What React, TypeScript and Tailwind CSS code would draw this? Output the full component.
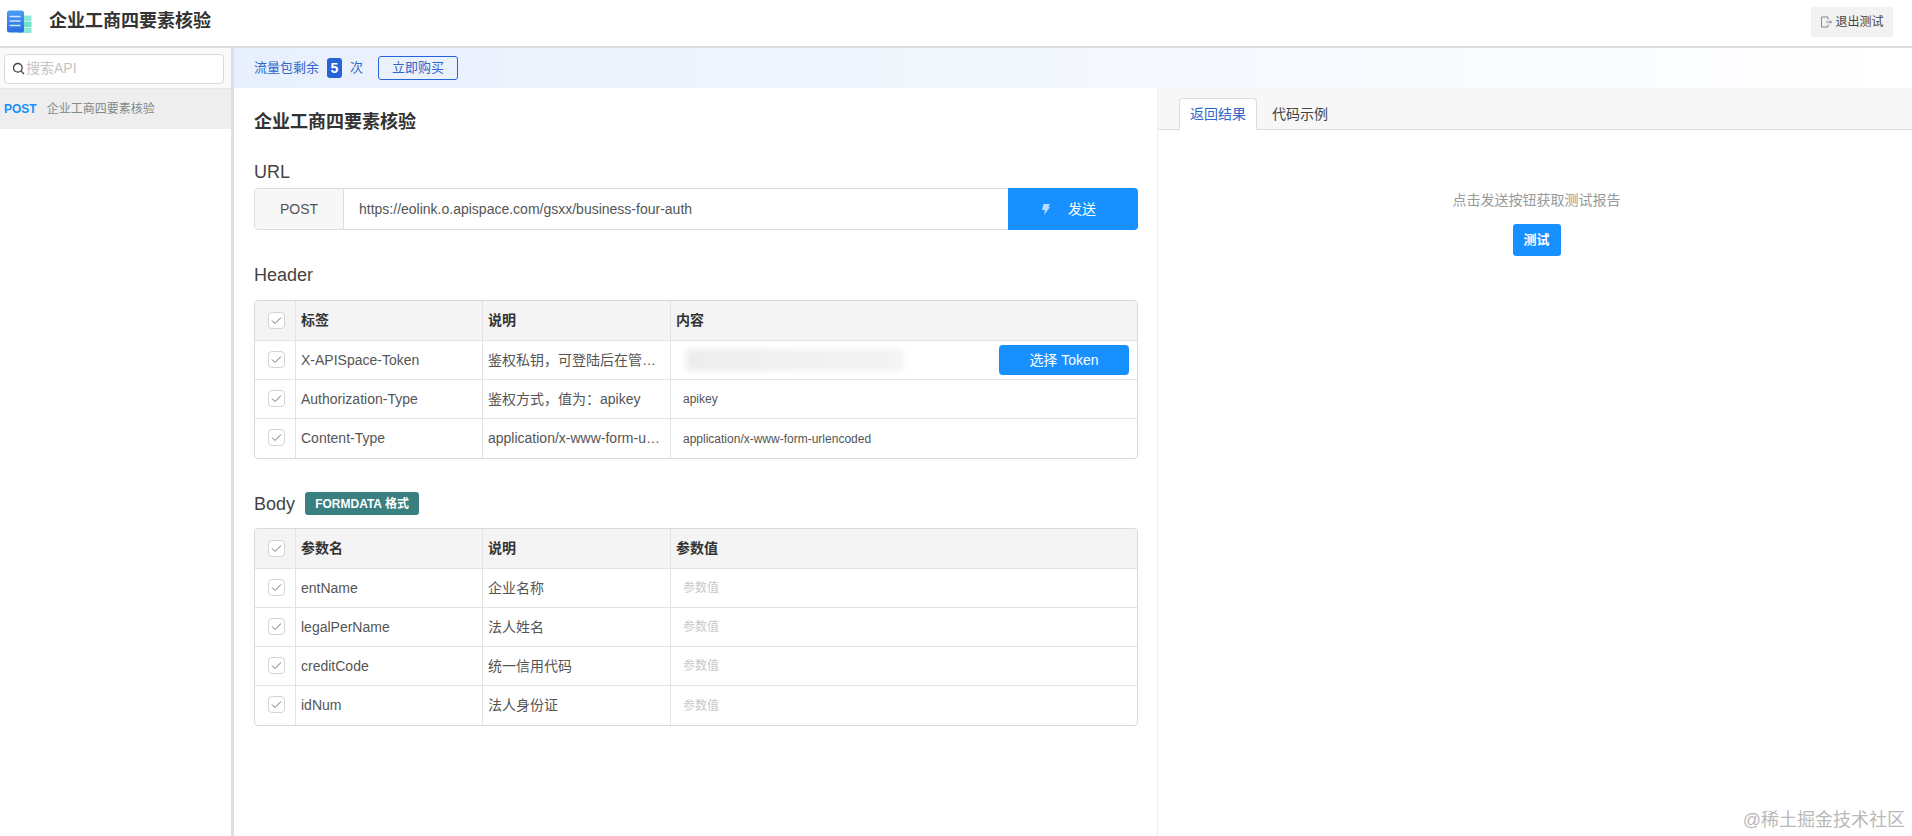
import React from "react";

const FONT = "[font-family:'Liberation_Sans','Noto_Sans_CJK_SC',sans-serif]";

function Logo() {
  return (
    <svg width="28" height="24" viewBox="0 0 28 24" className="shrink-0">
      <defs>
        <linearGradient id="lb" x1="0" y1="0" x2="0" y2="1">
          <stop offset="0" stopColor="#4a9cf2" />
          <stop offset="1" stopColor="#2a6fe0" />
        </linearGradient>
      </defs>
      <rect x="14" y="5.500" width="13.500" height="5.500" rx="1" fill="#8be8d6" />
      <rect x="14" y="11.500" width="13.500" height="5.500" rx="1" fill="#6fe0cc" />
      <rect x="14" y="17.500" width="13.500" height="5.500" rx="1" fill="#8be8d6" />
      <rect x="3" y="0.500" width="17" height="22" rx="2.500" fill="url(#lb)" />
      <path d="M6 6.500h10M6 11h10M6 15.500h10" stroke="#cfe6ff" strokeWidth="1.300" strokeLinecap="round" />
    </svg>
  );
}

function Check() {
  return (
    <span className="flex h-[17px] w-[17px] items-center justify-center rounded-[4px] border border-[#d4d4d4] bg-white">
      <svg width="11" height="9" viewBox="0 0 11 9" fill="none">
        <path d="M1 4.500 4 7.500 10 1.500" stroke="#6f6f6f" strokeWidth="1" />
      </svg>
    </span>
  );
}

type Row = { name: string; desc: string; value: React.ReactNode };

function ApiTable({ heads, rows }: { heads: string[]; rows: Row[] }) {
  const cell = "flex items-center border-l border-[#e3e3e3]";
  return (
    <div className="w-[884px] overflow-hidden rounded-[4px] border border-[#d9d9d9] text-[14px] text-[#555]">
      <div className="flex h-[40px] border-b border-[#e3e3e3] bg-[#f4f4f4] font-bold text-[#333]">
        <div className="flex w-[40px] items-center justify-center pl-[2px]"><Check /></div>
        <div className={`${cell} w-[187px] pl-[5px]`}>{heads[0]}</div>
        <div className={`${cell} w-[188px] pl-[5px]`}>{heads[1]}</div>
        <div className={`${cell} flex-1 pl-[5px]`}>{heads[2]}</div>
      </div>
      {rows.map((r, i) => (
        <div key={r.name} className={`flex h-[39px] ${i < rows.length - 1 ? "border-b border-[#e3e3e3]" : ""}`}>
          <div className="flex w-[40px] items-start justify-center pl-[2px] pt-[10px]"><Check /></div>
          <div className={`${cell} w-[187px] pl-[5px]`}>{r.name}</div>
          <div className={`${cell} w-[188px] pl-[5px]`}>
            <span className="whitespace-nowrap">{r.desc}</span>
          </div>
          <div className={`${cell} flex-1 pl-[12px]`}>{r.value}</div>
        </div>
      ))}
    </div>
  );
}

const Small = ({ children }: { children: React.ReactNode }) => (
  <span className="text-[12px] text-[#555]">{children}</span>
);
const Ph = () => <span className="text-[12px] text-[#c8c8c8]">参数值</span>;

export default function App() {
  return (
    <div className={`${FONT} relative flex h-[836px] w-[1912px] flex-col overflow-hidden bg-white`}>
      <header className="flex h-[48px] shrink-0 items-center border-b-2 border-[#dcdcdc] pb-[2px] pl-[4px] pr-[19px]">
        <Logo />
        <h1 className="mb-[2px] ml-[17px] text-[18px] font-bold text-[#333]">企业工商四要素核验</h1>
        <button className="ml-auto flex h-[30px] w-[82px] items-center justify-center gap-[3px] rounded-[3px] bg-[#f2f2f2] text-[12px] text-[#444]">
          <svg width="12" height="12" viewBox="0 0 12 12" fill="none" stroke="#888" strokeWidth="1">
            <path d="M8 3.500V1H1.500v10H8V8.500M6 6h5.500M10 4.500 11.500 6 10 7.500" />
          </svg>
          退出测试
        </button>
      </header>

      <div className="flex min-h-0 flex-1">
        <aside className="w-[234px] shrink-0 border-r-[3px] border-[#dedede]">
          <div className="flex h-[41px] items-center border-b border-[#e6e6e6] bg-[#fafafa] pl-[4px] pt-[1px]">
            <div className="flex h-[30px] w-[220px] items-center gap-[1px] rounded-[4px] border border-[#d9d9d9] bg-white pl-[7px]">
              <svg width="13" height="13" viewBox="0 0 13 13" fill="none" stroke="#444" strokeWidth="1.300">
                <circle cx="5.800" cy="5.800" r="4.300" />
                <path d="M9 9l3 3" />
              </svg>
              <span className="text-[14px] text-[#c4c4c4]">搜索API</span>
            </div>
          </div>
          <div className="flex h-[40px] items-center bg-[#eeeeee] pl-[4px] text-[12px]">
            <span className="font-bold text-[#1890ff]">POST</span>
            <span className="ml-[10px] text-[#7d8a8a]">企业工商四要素核验</span>
          </div>
        </aside>

        <div className="flex min-w-0 flex-1 flex-col">
          <div className="flex h-[40px] shrink-0 items-center bg-gradient-to-r from-[#e8f0fd] to-white pl-[20px] text-[13px] text-[#2f66c9]">
            <span>流量包剩余</span>
            <span className="ml-[8px] flex h-[20px] w-[15px] items-center justify-center rounded-[3px] bg-[#2563d6] text-[14px] font-bold text-white">5</span>
            <span className="ml-[8px]">次</span>
            <button className="ml-[15px] h-[24px] w-[80px] rounded-[3px] border border-[#2563d6] text-[13px] text-[#2f66c9]">立即购买</button>
          </div>

          <div className="flex min-h-0 flex-1">
            <main className="w-[924px] shrink-0 border-r border-[#eeeeee] pl-[20px] pr-[20px]">
              <h2 className="mt-[23px] text-[18px] leading-[22px] font-bold text-[#333]">企业工商四要素核验</h2>

              <h3 className="mt-[28px] text-[18px] leading-[22px] text-[#444]">URL</h3>
              <div className="mt-[5px] flex h-[42px] w-[884px] rounded-[4px] border border-[#dcdcdc] text-[14px] text-[#555]">
                <div className="flex w-[89px] items-center justify-center rounded-l-[4px] border-r border-[#dcdcdc] bg-[#f7f7f7]">POST</div>
                <div className="flex flex-1 items-center pl-[15px]">https://eolink.o.apispace.com/gsxx/business-four-auth</div>
                <button className="-my-px -mr-px flex w-[130px] items-center justify-center gap-[18px] rounded-r-[4px] bg-[#1890ff] pr-[8px] text-[14px] text-white">
                  <svg width="8" height="11" viewBox="0 0 8 11" fill="#b9dcff">
                    <path d="M1.500 0H8L6.500 3H8L2 11 3 6H0z" />
                  </svg>
                  发送
                </button>
              </div>

              <h3 className="mt-[34px] text-[18px] leading-[22px] text-[#444]">Header</h3>
              <div className="mt-[14px]">
                <ApiTable
                  heads={["标签", "说明", "内容"]}
                  rows={[
                    {
                      name: "X-APISpace-Token",
                      desc: "鉴权私钥，可登陆后在管…",
                      value: (
                        <div className="flex w-full items-center justify-between pr-[8px]">
                          <div className="ml-[3px] h-[22px] w-[218px] rounded-[4px] bg-gradient-to-r from-[#ededed] to-[#f4f4f4] blur-[3px]" />
                          <button className="h-[30px] w-[130px] rounded-[4px] bg-[#1890ff] text-[14px] text-white">选择 Token</button>
                        </div>
                      ),
                    },
                    { name: "Authorization-Type", desc: "鉴权方式，值为：apikey", value: <Small>apikey</Small> },
                    { name: "Content-Type", desc: "application/x-www-form-u…", value: <Small>application/x-www-form-urlencoded</Small> },
                  ]}
                />
              </div>

              <div className="mt-[33px] flex h-[23px] items-center">
                <h3 className="text-[18px] leading-[22px] text-[#444]">Body</h3>
                <span className="ml-[10px] flex h-[23px] w-[114px] items-center justify-center rounded-[3px] bg-[#3a8080] text-[12px] font-bold text-white">FORMDATA 格式</span>
              </div>
              <div className="mt-[13px]">
                <ApiTable
                  heads={["参数名", "说明", "参数值"]}
                  rows={[
                    { name: "entName", desc: "企业名称", value: <Ph /> },
                    { name: "legalPerName", desc: "法人姓名", value: <Ph /> },
                    { name: "creditCode", desc: "统一信用代码", value: <Ph /> },
                    { name: "idNum", desc: "法人身份证", value: <Ph /> },
                  ]}
                />
              </div>
            </main>

            <section className="min-w-0 flex-1">
              <div className="flex h-[42px] items-end border-b border-[#dddddd] bg-[#f7f7f7] pl-[21px] text-[14px]">
                <div className="-mb-px flex h-[32px] w-[78px] items-center justify-center rounded-t-[4px] border border-b-0 border-[#dddddd] bg-white text-[#2f66c9]">返回结果</div>
                <div className="-mb-px ml-[4px] flex h-[32px] w-[78px] items-center justify-center text-[#444]">代码示例</div>
              </div>
              <div className="flex flex-col items-center pl-[3px]">
                <p className="mt-[60px] text-[14px] leading-[20px] text-[#999]">点击发送按钮获取测试报告</p>
                <button className="mt-[14px] h-[32px] w-[48px] rounded-[3px] bg-[#1890ff] text-[13px] font-bold text-white">测试</button>
              </div>
            </section>
          </div>
        </div>
      </div>

      <div className="absolute right-[7px] bottom-[5px] text-[18px] leading-[22px] text-[#b9b9b9]">@稀土掘金技术社区</div>
    </div>
  );
}
